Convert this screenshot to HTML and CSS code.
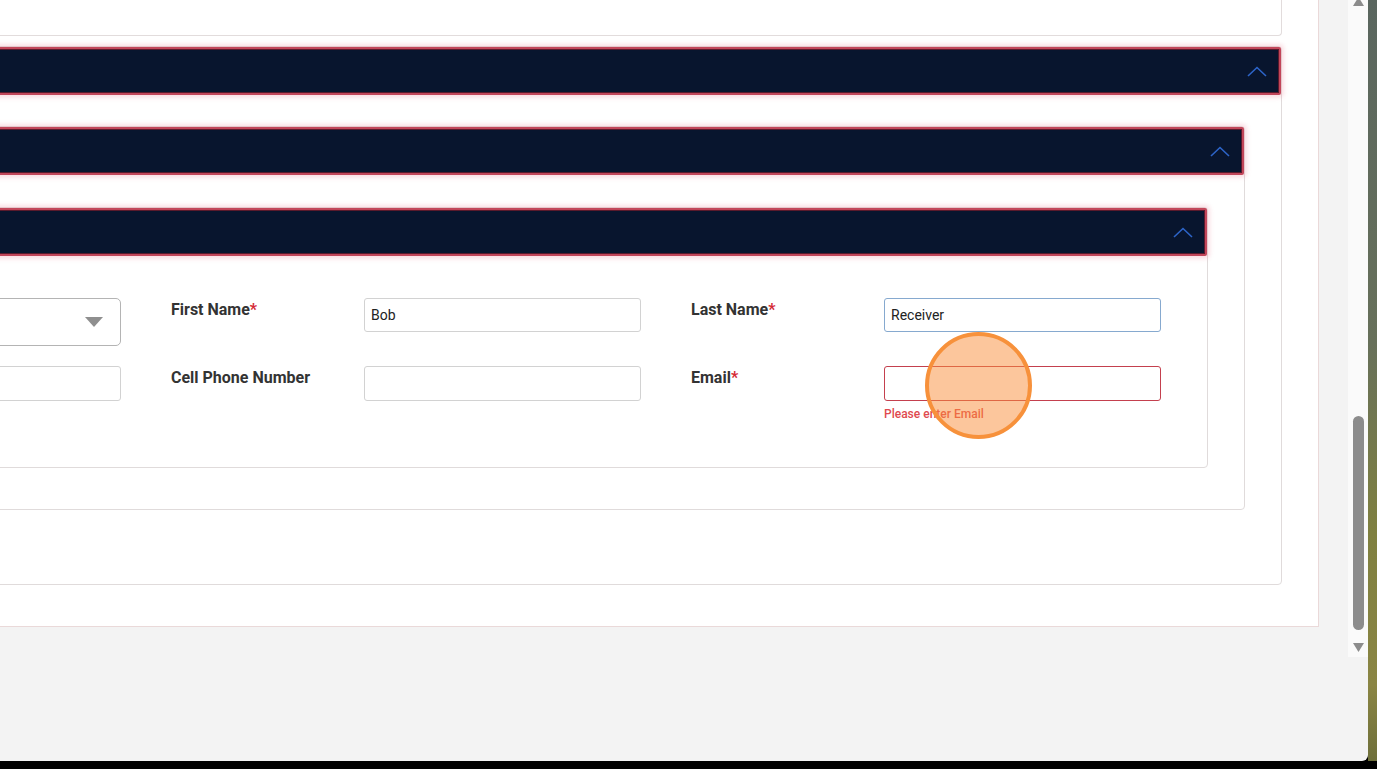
FILE: index.html
```html
<!DOCTYPE html>
<html>
<head>
<meta name="viewport" content="width=device-width, initial-scale=1">
<link rel="stylesheet" href="styles.css">
</head>
<body>
<div class="screen">
  <div class="viewport">
    <div class="content">
      <div class="panel">
        <div class="summary-card"></div>

        <!-- outer section -->
        <section class="card">
          <div class="card-head">
            <svg class="chevron" width="20" height="11" viewBox="0 0 20 11"><polyline points="1,10 10,1.5 19,10" /></svg>
          </div>
          <div class="card-body outer-body">

            <!-- middle section -->
            <section class="card">
              <div class="card-head">
                <svg class="chevron" width="20" height="11" viewBox="0 0 20 11"><polyline points="1,10 10,1.5 19,10" /></svg>
              </div>
              <div class="card-body mid-body">

                <!-- receiver details -->
                <section class="card">
                  <div class="card-head">
                    <svg class="chevron" width="20" height="11" viewBox="0 0 20 11"><polyline points="1,10 10,1.5 19,10" /></svg>
                  </div>
                  <div class="card-body form-body">
                    <div class="form-grid">
                      <label class="field-label"></label>
                      <div class="select-box">
                        <svg class="caret" width="18" height="10" viewBox="0 0 18 10"><polygon points="0,0 18,0 9,10" /></svg>
                      </div>

                      <label class="field-label">First Name<span class="req">*</span></label>
                      <input class="text-input" type="text" value="Bob">

                      <label class="field-label">Last Name<span class="req">*</span></label>
                      <input class="text-input focused" type="text" value="Receiver">

                      <label class="field-label"></label>
                      <input class="text-input tall" type="text">

                      <label class="field-label">Cell Phone Number</label>
                      <input class="text-input tall" type="text">

                      <label class="field-label">Email<span class="req">*</span></label>
                      <div class="field-cell">
                        <input class="text-input tall invalid" type="text">
                        <div class="error-msg">Please enter Email</div>
                      </div>
                    </div>
                  </div>
                </section>

              </div>
            </section>

          </div>
        </section>
      </div>
      <div class="click-marker"></div>
    </div>

    <div class="scroll-col">
      <div class="scrollbar">
        <svg class="arrow-up" width="11" height="9" viewBox="0 0 11 9"><polygon points="0,9 11,9 5.5,0" /></svg>
        <div class="thumb"></div>
        <svg class="arrow-down" width="11" height="9" viewBox="0 0 11 9"><polygon points="0,0 11,0 5.5,9" /></svg>
      </div>
    </div>
  </div>
  <div class="desktop"></div>
</div>
<div class="taskbar"></div>
</body>
</html>
```

FILE: styles.css
```css
* {
  box-sizing: border-box;
}

body {
  margin: 0;
  height: 769px;
  overflow: hidden;
  background: #000;
  font-family: Roboto, "Liberation Sans", sans-serif;
}

.screen {
  display: flex;
  height: 761px;
}

.viewport {
  display: flex;
  width: 1368px;
  background: #f3f3f3;
  border-bottom-right-radius: 6px;
}

.content {
  position: relative;
  width: 1348px;
  overflow: hidden;
}

.panel {
  width: 1826px;
  margin: -70px 0 0 -507px;
  padding: 0 36px 41px 36px;
  background: #fff;
  border: 1px solid #ead9d9;
}

.summary-card {
  height: 105px;
  margin-bottom: 10px;
  border: 1px solid #e2dcdc;
  border-top: none;
  border-radius: 0 0 4px 4px;
}

.card {
  background: #fff;
  border: 1px solid #e0dbdb;
  border-radius: 4px;
}

.card-head {
  display: flex;
  justify-content: flex-end;
  align-items: center;
  height: 48px;
  padding-right: 12px;
  background: #08152e;
  border: 2px solid #c2465a;
  border-radius: 2px;
  box-shadow: inset 0 0 0 1px #5a1a2c, 0 0 4px 3px rgba(240, 150, 165, 0.3);
}

.chevron polyline {
  fill: none;
  stroke: #2d64c8;
  stroke-width: 1.6;
}

.outer-body {
  padding: 31px 36px 74px 36px;
}

.mid-body {
  padding: 32px 36px 41px 36px;
}

.form-body {
  padding: 42px 46px 46px 46px;
}

.form-grid {
  display: grid;
  grid-template-columns: 143px 277px 143px 277px 143px 277px;
  column-gap: 50px;
  row-gap: 20px;
  align-items: start;
}

.field-label {
  padding-top: 2px;
  font-size: 16px;
  line-height: 20px;
  font-weight: bold;
  color: #333;
  white-space: nowrap;
}

.req {
  color: #d42a36;
}

.text-input {
  display: block;
  width: 100%;
  height: 34px;
  padding: 0 6px;
  font: 14px Roboto, "Liberation Sans", sans-serif;
  color: #222;
  background: #fff;
  border: 1px solid #d2d2d2;
  border-radius: 3px;
  outline: none;
}

.text-input.tall {
  height: 35px;
}

.text-input.focused {
  border-color: #86a9cf;
}

.text-input.invalid {
  border-color: #c4404e;
}

.error-msg {
  margin-top: 6px;
  font-size: 12px;
  line-height: 14px;
  font-weight: 500;
  color: #e04a4f;
}

.select-box {
  display: flex;
  justify-content: flex-end;
  align-items: center;
  height: 48px;
  padding-right: 17px;
  border: 1px solid #b4b4b4;
  border-radius: 5px;
}

.caret polygon {
  fill: #8f8f8f;
}

/* click indicator */
.click-marker {
  position: absolute;
  left: 925px;
  top: 332px;
  width: 107px;
  height: 107px;
  border: 4px solid #f7913b;
  border-radius: 50%;
  background: rgba(249, 142, 58, 0.5);
}

.scroll-col {
  width: 20px;
}

.scrollbar {
  display: flex;
  flex-direction: column;
  align-items: center;
  height: 657px;
  background: #fafafa;
}

.arrow-up {
  margin-top: -3px;
}

.arrow-up polygon,
.arrow-down polygon {
  fill: #8c8c8c;
}

.thumb {
  width: 11px;
  height: 214px;
  margin-top: 410px;
  border-radius: 6px;
  background: #8c8c8c;
}

.arrow-down {
  margin-top: 13px;
}

.desktop {
  width: 9px;
  background: linear-gradient(#5a665f, #67705a 45%, #7f8040 70%, #8a8544 90%, #6e6f3a);
}

.taskbar {
  height: 8px;
  background: #000;
}
```
